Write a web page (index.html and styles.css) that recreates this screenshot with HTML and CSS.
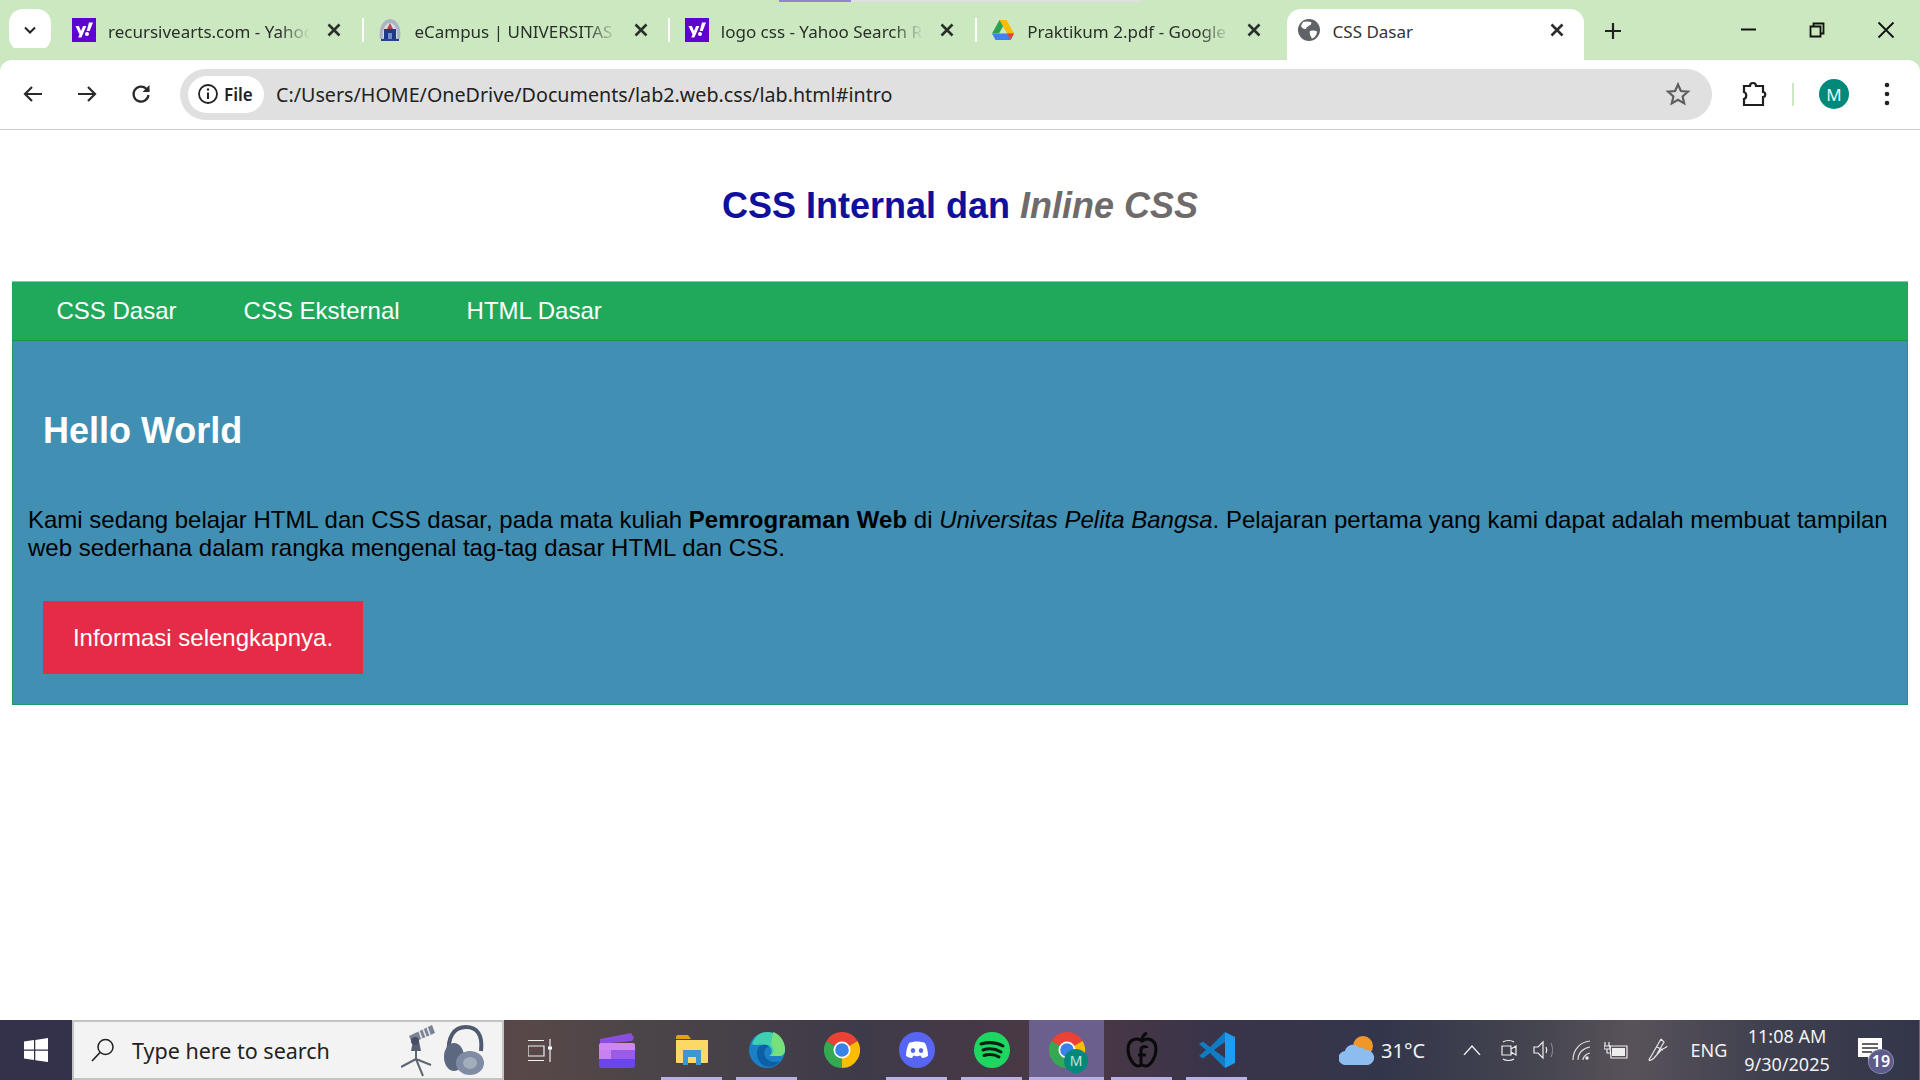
FILE: index.html
```html
<!DOCTYPE html>
<html lang="en">
<head>
    <meta charset="UTF-8">
    <title>CSS Dasar</title>
    <link rel="stylesheet" href="styles.css">
</head>
<body>

<svg class="defs" width="0" height="0">
    <symbol id="yahoo" viewBox="0 0 24 24">
        <rect width="24" height="24" fill="#5f01d1"/>
        <path d="M3.500 8h3.400l2.100 5 2.100-5h3.300l-5 11.500H6.200l1.300-3z" fill="#fff"/>
        <path d="M17 4.500h4l-3.300 8.500h-3z" fill="#fff"/>
        <circle cx="15" cy="16" r="2" fill="#fff"/>
    </symbol>
    <symbol id="close" viewBox="0 0 24 24">
        <path d="M6.500 6.500l11 11M17.500 6.500l-11 11" stroke="#2b2f2b" stroke-width="2.600" fill="none"/>
    </symbol>
    <symbol id="chrome" viewBox="0 0 36 36">
        <path d="M18 18L2.400 9A18 18 0 0 1 33.600 9z" fill="#ea4335"/>
        <path d="M18 18L33.600 9A18 18 0 0 1 18 36z" fill="#fbbc04"/>
        <path d="M18 18L18 36A18 18 0 0 1 2.400 9z" fill="#34a853"/>
        <circle cx="18" cy="18" r="8.500" fill="#fff"/>
        <circle cx="18" cy="18" r="6.800" fill="#3b82e8"/>
    </symbol>
</svg>

<div class="screen">
    <div class="load-bar"><span class="load-done"></span></div>

    <div class="tabstrip">
        <button class="tab-search">
            <svg width="16" height="16" viewBox="0 0 16 16"><path d="M3 5.500l5 5 5-5" stroke="#222" stroke-width="2" fill="none"/></svg>
        </button>
        <div class="tab">
            <svg class="favicon" width="24" height="24"><use href="#yahoo"/></svg>
            <span class="tab-title">recursivearts.com - Yahoo Search Results</span>
            <svg class="tab-close" width="24" height="24"><use href="#close"/></svg>
            <i class="tab-sep"></i>
        </div>
        <div class="tab">
            <svg class="favicon" width="24" height="24" viewBox="0 0 24 24">
                <path d="M2 21C0 10 5 1 12 1s12 9 10 20z" fill="#a9b4c6"/>
                <path d="M5 20C4 12 7 5 12 5s8 7 7 15z" fill="#d5dae2"/>
                <path d="M12 5l3 6H9z" fill="#b8483c"/>
                <path d="M6 11h12v11H6z" fill="#1d3a8a"/>
                <path d="M10 15h4v7h-4z" fill="#6f8cc4"/>
                <path d="M3 21h18v2H3z" fill="#24448e"/>
            </svg>
            <span class="tab-title">eCampus | UNIVERSITAS PELITA BANGSA</span>
            <svg class="tab-close" width="24" height="24"><use href="#close"/></svg>
            <i class="tab-sep"></i>
        </div>
        <div class="tab">
            <svg class="favicon" width="24" height="24"><use href="#yahoo"/></svg>
            <span class="tab-title">logo css - Yahoo Search Results</span>
            <svg class="tab-close" width="24" height="24"><use href="#close"/></svg>
            <i class="tab-sep"></i>
        </div>
        <div class="tab">
            <svg class="favicon" width="24" height="24" viewBox="0 0 24 24">
                <path d="M8.500 2h7L8 15.500H1z" fill="#2aa350"/>
                <path d="M15.500 2L23 15.500h-7L8.500 2z" fill="#fbbc04"/>
                <path d="M1 15.500h22L19.500 22h-15z" fill="#3f82ef"/>
                <path d="M16 15.500h7L19.500 22z" fill="#ea4335"/>
            </svg>
            <span class="tab-title">Praktikum 2.pdf - Google Drive</span>
            <svg class="tab-close" width="24" height="24"><use href="#close"/></svg>
        </div>
        <div class="tab tab-active">
            <svg class="favicon" width="24" height="24" viewBox="0 0 24 24">
                <circle cx="12" cy="12" r="11" fill="#5f6368"/>
                <path d="M6 4c3-1 6-.5 8 0 1 1 0 3-2 3.500-1 1.500-3 1.500-3 3.500-2 .5-4-1-5-3zM13 13c2-1 5-.5 7 .5 0 3-2 6-5 7-1-2-3-5-2-7.500z" fill="#fff"/>
            </svg>
            <span class="tab-title">CSS Dasar</span>
            <svg class="tab-close" width="24" height="24"><use href="#close"/></svg>
        </div>
        <svg class="new-tab" width="24" height="24" viewBox="0 0 24 24"><path d="M12 4v16M4 12h16" stroke="#222" stroke-width="2.200"/></svg>
        <div class="window-btns">
            <svg width="24" height="24" viewBox="0 0 24 24"><path d="M5 11.500h15" stroke="#111" stroke-width="2"/></svg>
            <svg width="24" height="24" viewBox="0 0 24 24"><path d="M5.500 8.500h10v10h-10zM8.500 8V5.500h10v10H16" stroke="#111" stroke-width="1.800" fill="none"/></svg>
            <svg width="24" height="24" viewBox="0 0 24 24"><path d="M4.500 4.500l15 15M19.500 4.500l-15 15" stroke="#111" stroke-width="1.800"/></svg>
        </div>
    </div>

    <div class="toolbar">
        <svg class="nav-icon" width="24" height="24" viewBox="0 0 24 24"><path d="M21 12H4M11 5l-7 7 7 7" stroke="#2a2a2a" stroke-width="2.200" fill="none"/></svg>
        <svg class="nav-icon" width="24" height="24" viewBox="0 0 24 24"><path d="M3 12h17M13 5l7 7-7 7" stroke="#2a2a2a" stroke-width="2.200" fill="none"/></svg>
        <svg class="nav-icon" width="24" height="24" viewBox="0 0 24 24"><path d="M19.500 13a7.500 7.500 0 1 1-2.200-6.300L20 9" stroke="#2a2a2a" stroke-width="2.200" fill="none"/><path d="M20.500 3v7h-7z" fill="#2a2a2a"/></svg>
        <div class="omnibox">
            <div class="chip">
                <svg width="22" height="22" viewBox="0 0 22 22"><circle cx="11" cy="11" r="9" stroke="#222" stroke-width="1.800" fill="none"/><path d="M11 9.500V16" stroke="#222" stroke-width="2"/><circle cx="11" cy="6.500" r="1.200" fill="#222"/></svg>
                <span>File</span>
            </div>
            <span class="url">C:/Users/HOME/OneDrive/Documents/lab2.web.css/lab.html#intro</span>
            <svg class="star" width="26" height="26" viewBox="0 0 26 26"><path d="M13 3.500l2.900 6.500 7 .7-5.300 4.700 1.600 7L13 18.800l-6.200 3.600 1.600-7-5.300-4.700 7-.7z" stroke="#5f5f5f" stroke-width="2.200" fill="none"/></svg>
        </div>
        <svg class="puzzle" width="26" height="28" viewBox="0 0 26 28"><path d="M3 6h6c0-4 6-4 6 0h7v6c3 0 3 5 0 5v8H3v-6c3-1 3-6 0-7z" stroke="#1f1f1f" stroke-width="2.200" fill="none"/></svg>
        <i class="toolbar-sep"></i>
        <span class="avatar">M</span>
        <svg class="menu-dots" width="8" height="26" viewBox="0 0 8 26"><circle cx="4" cy="4" r="2.300" fill="#222"/><circle cx="4" cy="13" r="2.300" fill="#222"/><circle cx="4" cy="22" r="2.300" fill="#222"/></svg>
    </div>

    <main class="page">
        <h1 class="judul">CSS Internal dan <em>Inline CSS</em></h1>
        <nav class="menu">
            <a href="#">CSS Dasar</a>
            <a href="#">CSS Eksternal</a>
            <a href="#">HTML Dasar</a>
        </nav>
        <section class="intro">
            <h2>Hello World</h2>
            <p>Kami sedang belajar HTML dan CSS dasar, pada mata kuliah <b>Pemrograman Web</b> di <i>Universitas Pelita Bangsa</i>. Pelajaran pertama yang kami dapat adalah membuat tampilan web sederhana dalam rangka mengenal tag-tag dasar HTML dan CSS.</p>
            <a class="tombol" href="#">Informasi selengkapnya.</a>
        </section>
    </main>

    <footer class="taskbar">
        <div class="start">
            <svg width="24" height="24" viewBox="0 0 24 24"><path d="M0 3.500l10-1.400V11.500H0zM11.300 1.900L24 0v11.500H11.300zM0 12.800h10v9.200L0 20.600zM11.300 12.800H24V24l-12.700-1.800z" fill="#fff"/></svg>
        </div>
        <div class="search">
            <svg width="26" height="26" viewBox="0 0 26 26"><circle cx="15.500" cy="10" r="7.500" stroke="#222" stroke-width="1.500" fill="none"/><path d="M10 15.500L2 24" stroke="#222" stroke-width="1.700"/></svg>
            <span class="search-text">Type here to search</span>
            <svg class="search-art" width="36" height="54" viewBox="0 0 36 54">
                <path d="M15 28v8M15 36L0 44M15 36l15 6M15 36l7 17" stroke="#5d6675" stroke-width="2" fill="none"/>
                <path d="M12 18l-2 10h10l-2-10z" fill="#566072"/>
                <path d="M8 13L31 2l3 8-23 10z" fill="#7a8296"/>
                <path d="M18 8l3 8M22 6l3 8M26 4l3 8" stroke="#dfe3e6" stroke-width="1.800"/>
                <circle cx="14" cy="18" r="4" fill="#454e62"/>
            </svg>
            <svg width="41" height="50" viewBox="0 0 41 50">
                <path d="M5 30C3 12 10 2 22 2c11 0 17 8 15 24" stroke="#4f5a70" stroke-width="4" fill="none"/>
                <ellipse cx="10" cy="32" rx="10" ry="14" fill="#5c6880"/>
                <ellipse cx="26" cy="38" rx="14" ry="12" fill="#7f8ca3"/>
                <ellipse cx="26" cy="38" rx="7" ry="6" fill="#a3aebd"/>
            </svg>
        </div>
        <div class="task-item">
            <svg class="task-view" width="24" height="23" viewBox="0 0 24 23"><path d="M0 1.500h16M0 21.500h16M0 7h16v10H0zM22 0v23" stroke="#f0f0f0" stroke-width="1.200" fill="none"/><path d="M20 7.500h4v3h-4z" fill="#fff"/></svg>
        </div>
        <div class="task-item">
            <svg width="36" height="35" viewBox="0 0 36 35">
                <path d="M1 6L32 0l3 5-2 3-32 3z" fill="#8a4fe0"/>
                <path d="M0 12a2 2 0 0 1 2-2h32a2 2 0 0 1 2 2v8H0z" fill="#cd86f2"/>
                <path d="M0 20h36v13a2 2 0 0 1-2 2H2a2 2 0 0 1-2-2z" fill="#6a45ec"/>
                <path d="M12 17h24v9H12z" fill="#9a5ce8"/>
                <path d="M0 17h12v9H0z" fill="#c481ef"/>
            </svg>
        </div>
        <div class="task-item task-open">
            <svg width="32" height="30" viewBox="0 0 32 30">
                <path d="M0 2a2 2 0 0 1 2-2h10l3 4H0z" fill="#dfa40c"/>
                <path d="M0 5h32v22a1 1 0 0 1-1 1H1a1 1 0 0 1-1-1z" fill="#fcd967"/>
                <path d="M7 15h18v15h-5v-8h-8v8H7z" fill="#3c96d6"/>
            </svg>
        </div>
        <div class="task-item task-open">
            <svg width="36" height="36" viewBox="0 0 36 36">
                <circle cx="18" cy="18" r="18" fill="#1b7fc4"/>
                <path d="M3 12C6 3 13 0 18 0c10 0 18 8 18 18 0 3-2 6-6 6H20c4-2 4-10-3-11-6-1-11 1-14-1z" fill="#3ed0b0"/>
                <path d="M24 0c7 2 12 9 12 18 0 4-3 6-6 6h-8c4-3 3-9 0-11z" fill="#77e07c"/>
                <path d="M8 21c0-7 6-10 12-7-5 2-6 7-3 12 3 4 9 5 14 3-4 5-10 7-15 5C11 32 8 27 8 21z" fill="#0e5ea5"/>
            </svg>
        </div>
        <div class="task-item">
            <svg width="36" height="36"><use href="#chrome"/></svg>
        </div>
        <div class="task-item task-open">
            <svg width="36" height="36" viewBox="0 0 36 36">
                <circle cx="18" cy="18" r="18" fill="#5865f2"/>
                <path d="M10 11c5-2 11-2 16 0 2 4 3 8 3 13-2 1-4 2-6 2l-1.500-2.500c-3 1-4 1-7 0L13 26c-2 0-4-1-6-2 0-5 1-9 3-13z" fill="#fff"/>
                <ellipse cx="14" cy="18.500" rx="2.200" ry="2.600" fill="#5865f2"/>
                <ellipse cx="22" cy="18.500" rx="2.200" ry="2.600" fill="#5865f2"/>
            </svg>
        </div>
        <div class="task-item task-open">
            <svg width="36" height="36" viewBox="0 0 36 36">
                <circle cx="18" cy="18" r="18" fill="#1ed760"/>
                <path d="M7 12c7-2 15-2 22 2M9 18c6-2 13-1 18 2M10 23.500c5-1.500 11-1 15 1.500" stroke="#0c1f12" stroke-width="3" stroke-linecap="round" fill="none"/>
            </svg>
        </div>
        <div class="task-item task-open task-active">
            <svg width="36" height="36"><use href="#chrome"/></svg>
            <span class="task-badge">M</span>
        </div>
        <div class="task-item task-open">
            <svg width="32" height="36" viewBox="0 0 32 36">
                <path d="M16 9C11 5 2 7 2 17c0 9 6 17 10 17 2 0 3-1 4-1s2 1 4 1c4 0 10-8 10-17 0-10-9-12-14-8z" stroke="#0a0a0a" stroke-width="3" fill="none"/>
                <path d="M16 9c0-4 2-7 5-8M15 33V18c0-4 6-4 6-2M12 23h8" stroke="#0a0a0a" stroke-width="3" fill="none"/>
            </svg>
        </div>
        <div class="task-item task-open">
            <svg width="36" height="36" viewBox="0 0 36 36">
                <path d="M26 0l10 5v26l-10 5z" fill="#1f9cf0"/>
                <path d="M26 0L11 15 4 9.500 0 12l7 6-7 6 4 2.500L11 21l15 15V26L15 18 26 10z" fill="#0f7cc4"/>
            </svg>
        </div>

        <div class="tray">
            <svg width="36" height="30" viewBox="0 0 36 30">
                <circle cx="24" cy="11" r="10" fill="#f0972a"/>
                <path d="M7 30a7 7 0 0 1-1-14c1-6 10-9 14-3 2-1 5-1 6 2a7.500 7.500 0 0 1 3 15z" fill="#8dbcf0"/>
            </svg>
            <span class="tray-temp">31°C</span>
            <svg width="18" height="10" viewBox="0 0 18 10"><path d="M1 10l8-9 8 9" stroke="#f2f2f2" stroke-width="1.300" fill="none"/></svg>
            <svg width="18" height="24" viewBox="0 0 18 24"><path d="M2 8h9v9H2zM11 11l5-3v9l-5-3M3 4c3-2 8-2 11 0M3 21c3 2 8 2 11 0" stroke="#eee" stroke-width="1.200" fill="none"/></svg>
            <svg width="22" height="20" viewBox="0 0 22 20"><path d="M1 7h4l5-5v16l-5-5H1zM13 7c1 2 1 4 0 6" stroke="#eee" stroke-width="1.200" fill="none"/><path d="M18 3c2 4 2 10 0 14" stroke="#888" stroke-width="1.200" fill="none"/></svg>
            <svg width="18" height="20" viewBox="0 0 18 20"><path d="M1 20C1 10 8 2 18 1M6 20c0-7 5-12 12-13M11 20c0-3 3-6 7-7" stroke="#ddd" stroke-width="1.200" fill="none"/><circle cx="15" cy="18" r="1.700" fill="#eee"/></svg>
            <svg width="24" height="18" viewBox="0 0 24 18"><path d="M1 1v4M5 1v4M0 5h6v3H0zM3 8v4h4" stroke="#eee" stroke-width="1.200" fill="none"/><path d="M6 5h17v12H7z" stroke="#eee" stroke-width="1.200" fill="none"/><path d="M8 7h13v8H8z" fill="#eee"/></svg>
            <svg width="20" height="24" viewBox="0 0 20 24"><path d="M13 1l-8 14c-2 4-4 6-4 7s3 0 5-2l7-8c2-2 6-2 6-4M9 9l6 3M13 1l3 3-7 12" stroke="#e6e6e6" stroke-width="1.200" fill="none"/></svg>
            <span class="tray-lang">ENG</span>
            <div class="clock">
                <span>11:08 AM</span>
                <span>9/30/2025</span>
            </div>
            <div class="notif">
                <svg width="24" height="26" viewBox="0 0 24 26"><path d="M0 0h24v19H15l-5 6v-6H0z" fill="#fff"/><path d="M4 6h16M4 10h16M4 14h10" stroke="#333" stroke-width="1.300"/></svg>
                <span class="notif-count">19</span>
            </div>
        </div>
    </footer>
</div>

</body>
</html>
```

FILE: styles.css
```css
* {
    box-sizing: border-box;
}
body {
    margin: 0;
    background-color: #fff;
}
.defs {
    display: block;
    height: 0;
}
.screen {
    position: relative;
    display: flex;
    flex-direction: column;
    height: 1080px;
    overflow: hidden;
    font-family: "Noto Sans", sans-serif;
}
.load-bar {
    position: absolute;
    left: 779px;
    top: 0;
    width: 362px;
    height: 2px;
    background-color: #dfdfdf;
}
.load-done {
    display: block;
    width: 72px;
    height: 2px;
    background-color: #8e85d4;
}

/* tab bar */
.tabstrip {
    display: flex;
    align-items: flex-end;
    height: 60px;
    padding-left: 9px;
    background-color: #cbe8c0;
}
.tab-search {
    width: 42px;
    height: 42px;
    margin: 0 9px 9px 0;
    padding: 0;
    border: 0;
    border-radius: 14px;
    background-color: #fff;
    display: flex;
    align-items: center;
    justify-content: center;
}
.tab {
    position: relative;
    display: flex;
    align-items: center;
    gap: 12px;
    width: 306.400px;
    height: 51px;
    padding: 0 12px 9px;
    color: #2b2f2b;
    font-size: 17px;
}
.tab-title {
    flex: 1;
    min-width: 0;
    padding-top: 2px;
    white-space: nowrap;
    overflow: hidden;
    -webkit-mask-image: linear-gradient(to right, #000 85%, transparent);
    mask-image: linear-gradient(to right, #000 85%, transparent);
}
.tab-close {
    flex: none;
    margin-right: 8px;
}
.favicon {
    flex: none;
}
.tab-sep {
    position: absolute;
    left: 302px;
    top: 9px;
    width: 2px;
    height: 24px;
    background-color: #fff;
}
.tab-active {
    width: 297px;
    margin-left: 1px;
    padding-left: 10px;
    background-color: #fff;
    border-radius: 14px 14px 0 0;
    color: #333;
}
.tab-active .tab-title {
    -webkit-mask-image: none;
    mask-image: none;
}
.tab-active .tab-close {
    margin-right: 3px;
}
.new-tab {
    margin: 0 0 17px 17px;
}
.window-btns {
    display: flex;
    gap: 45px;
    margin-left: auto;
    padding: 0 22px 18px 0;
}
.window-btns svg {
    display: block;
}

/* address bar */
.toolbar {
    display: flex;
    align-items: center;
    height: 70px;
    padding: 0 0 1px 21px;
    background-color: #fff;
    border-bottom: 1px solid #cfcfcf;
    border-radius: 12px 12px 0 0;
    box-shadow: 0 -12px 0 #cbe8c0;
}
.nav-icon {
    flex: none;
    margin-right: 30px;
}
.omnibox {
    display: flex;
    align-items: center;
    width: 1532px;
    height: 51px;
    margin-left: -3px;
    padding: 0 21px 0 8px;
    background-color: #e0e0e0;
    border-radius: 26px;
}
.chip {
    display: flex;
    align-items: center;
    gap: 5px;
    width: 76px;
    height: 37px;
    padding-left: 9px;
    background-color: #fff;
    border-radius: 19px;
    color: #222;
    font-size: 17px;
    font-weight: 600;
}
.url {
    flex: 1;
    margin-left: 12px;
    color: #222;
    font-size: 19.700px;
}
.puzzle {
    flex: none;
    margin-left: 29px;
}
.toolbar-sep {
    width: 2px;
    height: 23px;
    margin-left: 25px;
    background-color: #cbe8c0;
}
.avatar {
    display: flex;
    align-items: center;
    justify-content: center;
    width: 30px;
    height: 30px;
    margin-left: 25px;
    border-radius: 50%;
    background-color: #00897b;
    color: #e8f5f2;
    font-size: 17px;
}
.menu-dots {
    margin-left: 34px;
}

/* isi halaman */
.page {
    flex: 1;
    padding: 0 12px;
    font-family: "Liberation Sans", Arial, sans-serif;
}
.judul {
    margin: 0;
    padding: 55px 0 54px;
    height: 151px;
    text-align: center;
    color: #10109c;
    font-size: 36px;
    line-height: 42px;
}
.judul em {
    color: #6f6b6b;
}
.menu {
    display: flex;
    height: 60px;
    padding-left: 11px;
    background-color: #21a95b;
    border-top: 1px solid #7fc4d0;
    border-bottom: 1px solid #17964d;
}
.menu a {
    padding: 0 33.500px;
    color: #fff;
    font-size: 24px;
    line-height: 58px;
    text-decoration: none;
}
.intro {
    height: 364px;
    padding: 0 15px;
    background-color: #418fb3;
    border: 1px solid #1d9a68;
    border-top: 0;
}
.intro h2 {
    margin: 0;
    padding: 69px 0 0 15px;
    color: #fff;
    font-size: 36px;
    line-height: 42px;
}
.intro p {
    margin: 54px 0 0;
    color: #000;
    font-size: 24px;
    line-height: 28px;
}
.tombol {
    display: block;
    width: 320px;
    height: 73px;
    margin: 39px 0 0 15px;
    background-color: #e52b47;
    color: #fff;
    font-size: 24px;
    line-height: 73px;
    text-align: center;
    text-decoration: none;
}

/* taskbar windows */
.taskbar {
    display: flex;
    align-items: stretch;
    height: 60px;
    background: linear-gradient(to right, #33324a 0%, #3a3549 20%, #594848 27%, #4c4548 33%, #3f3a49 45%, #4c3844 56%, #3a344a 63%, #33364b 72%, #45454f 80%, #59525a 85%, #3f404f 92%, #33364a 100%);
}
.start {
    display: flex;
    align-items: center;
    justify-content: center;
    width: 72px;
    background-color: #33324a;
}
.search {
    display: flex;
    align-items: center;
    width: 432px;
    padding: 0 17px 0 16px;
    background-color: #f3f3f3;
    border: 2px solid #c4c4c4;
}
.search-text {
    margin-left: 16px;
    flex: 1;
    color: #222;
    font-size: 21.500px;
}
.search-art {
    margin-right: 7px;
}
.task-item {
    position: relative;
    display: flex;
    align-items: center;
    justify-content: center;
    flex: none;
    width: 75px;
}
.task-view {
    margin-right: 4px;
}
.task-open::after {
    content: "";
    position: absolute;
    left: 7px;
    right: 7px;
    bottom: 0;
    height: 3px;
    background-color: #b9b0e8;
}
.task-active {
    background-color: #6b5f8e;
}
.task-active::after {
    left: 0;
    right: 0;
}
.task-badge {
    position: absolute;
    left: 35px;
    top: 29px;
    width: 24px;
    height: 24px;
    border-radius: 50%;
    background-color: #00897b;
    color: #bfe6e0;
    font-size: 14px;
    line-height: 24px;
    text-align: center;
}
.tray {
    display: grid;
    grid-template-columns: 48px 73px 36px 37px 34px 40px 30px 54px 48px 108px 79px;
    align-items: center;
    justify-items: center;
    margin-left: auto;
    color: #f2f2f2;
}
.tray-temp {
    justify-self: start;
    font-size: 20px;
}
.tray-lang {
    font-size: 18px;
}
.clock {
    display: flex;
    flex-direction: column;
    align-items: center;
    gap: 4px;
    font-size: 18px;
    line-height: 24px;
}
.notif {
    position: relative;
    width: 79px;
    height: 60px;
    border-right: 1px solid #6a6a72;
}
.notif svg {
    position: absolute;
    left: 17px;
    top: 18px;
}
.notif-count {
    position: absolute;
    left: 27px;
    top: 29px;
    width: 26px;
    height: 25px;
    border-radius: 50%;
    background-color: #5d5a8c;
    border: 1px solid #8a88ad;
    color: #fff;
    font-size: 16px;
    font-weight: 600;
    line-height: 23px;
    text-align: center;
}
```
